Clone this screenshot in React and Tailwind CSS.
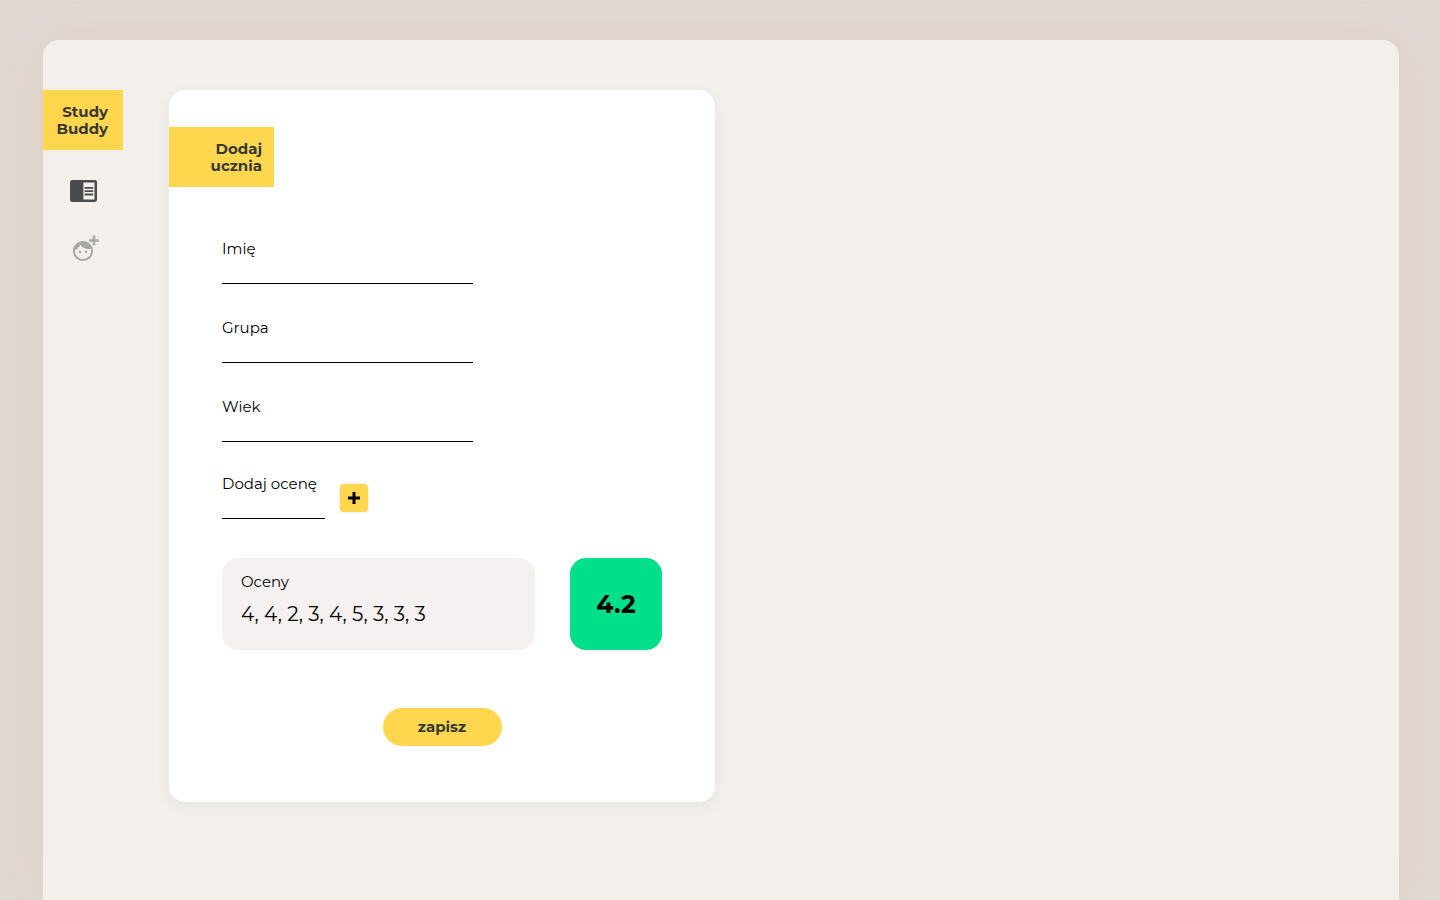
function ReaderIcon() {
  return (
    <svg viewBox="0 0 27 22" className="h-[22px] w-[27px]" fill="currentColor" aria-hidden="true">
      <path
        fillRule="evenodd"
        d="M2.2 0h22.6Q27 0 27 2.2v17.6q0 2.2-2.2 2.2H2.2Q0 22 0 19.8V2.2Q0 0 2.2 0zM13.4 2.6v16.9h11.1V2.6z"
      />
      <path d="M14.6 7h8.6v1.8h-8.6zM14.6 10.2h8.6V12h-8.6zM14.6 13.6h8.6v1.8h-8.6z" />
    </svg>
  );
}

function AddStudentIcon() {
  return (
    <svg viewBox="0 0 30 28" className="h-7 w-[30px]" fill="currentColor" aria-hidden="true">
      <g transform="translate(0 4)">
        <path d="M9 11.75c-.69 0-1.25.56-1.25 1.25s.56 1.25 1.25 1.25 1.25-.56 1.25-1.25-.56-1.25-1.25-1.25zm6 0c-.69 0-1.25.56-1.25 1.25s.56 1.25 1.25 1.25 1.25-.56 1.25-1.25-.56-1.25-1.25-1.25zM12 2C6.48 2 2 6.48 2 12s4.48 10 10 10 10-4.48 10-10S17.52 2 12 2zm0 18c-4.41 0-8-3.59-8-8 0-.29.02-.58.05-.86 2.36-1.05 4.23-2.98 5.21-5.37C11.07 8.33 14.05 10 17.42 10c.78 0 1.53-.09 2.25-.26.21.71.33 1.47.33 2.26 0 4.41-3.59 8-8 8z" />
      </g>
      <path d="M21.7 0.5h2.6v3.7h3.7v2.6h-3.7v3.4h-2.6V6.8h-3.7V4.2h3.7z" />
    </svg>
  );
}

function Field({ id, label, width }) {
  return (
    <div className={`flex flex-col ${width}`}>
      <label htmlFor={id} className="whitespace-nowrap leading-[22px]">
        {label}
      </label>
      <input id={id} type="text" className="h-6 w-full border-b border-black bg-transparent outline-none" />
    </div>
  );
}

export default function App() {
  return (
    <div className="flex min-h-screen bg-[#e0d8d3] pl-[43px] pr-[41px] pt-10 font-[Montserrat,'Noto_Sans',sans-serif] text-[15px] text-black">
      <div className="flex flex-1 items-start gap-[46px] rounded-t-2xl bg-[#f3f0eb] pt-[50px] shadow-[0_0_40px_#e0cfc2]">
        <aside className="w-20 shrink-0">
          <h1 className="flex h-[60px] flex-col justify-center bg-[#ffd74f] pr-[15px] text-right leading-[17px] font-bold text-[#383838]">
            <span>Study</span>
            <span>Buddy</span>
          </h1>
          <nav className="flex flex-col items-start gap-[33px] pt-[30px] pl-[27px]">
            <a href="#students" aria-label="Uczniowie" className="text-[#4b4b4b]">
              <ReaderIcon />
            </a>
            <a href="#add" aria-label="Dodaj ucznia" className="pl-px text-[#a9a8a6]">
              <AddStudentIcon />
            </a>
          </nav>
        </aside>

        <main className="mb-24 w-full max-w-[546px] rounded-2xl bg-white pt-[37px] pb-14 shadow-[0_4px_16px_rgba(60,90,70,0.07)]">
          <h2 className="flex h-[60px] w-[105px] flex-col justify-center bg-[#ffd74f] pr-3 text-right leading-[17px] font-bold text-[#383838]">
            <span>Dodaj</span>
            <span>ucznia</span>
          </h2>
          <form className="flex flex-col px-[53px] pt-[51px]" onSubmit={(e) => e.preventDefault()}>
            <div className="flex flex-col gap-[33px]">
              <Field id="name" label="Imię" width="w-[251px]" />
              <Field id="group" label="Grupa" width="w-[251px]" />
              <Field id="age" label="Wiek" width="w-[251px]" />
            </div>
            <div className="flex items-center gap-[15px] pt-[31px]">
              <Field id="grade" label="Dodaj ocenę" width="w-[103px]" />
              <button
                type="button"
                aria-label="Dodaj ocenę do listy"
                className="mt-1 flex size-7 items-center justify-center rounded bg-[#ffd74f] shadow-[0_0_3px_rgba(0,0,0,0.12)]"
              >
                <svg viewBox="0 0 12 12" className="size-3" aria-hidden="true">
                  <path d="M4.5 0h3v4.5H12v3H7.5V12h-3V7.5H0v-3h4.5z" />
                </svg>
              </button>
            </div>
            <div className="flex justify-between gap-[35px] pt-[39px]">
              <section className="flex h-[92px] flex-1 flex-col rounded-2xl bg-[#f5f1f0] px-[19px] pt-[14px]">
                <h3 className="leading-5">Oceny</h3>
                <p className="pt-2 text-xl">4, 4, 2, 3, 4, 5, 3, 3, 3</p>
              </section>
              <output className="flex size-[92px] items-center justify-center rounded-2xl bg-[#00e08a] text-[25px] leading-8 font-bold">
                4.2
              </output>
            </div>
            <button
              type="submit"
              className="mt-[58px] h-[38px] w-[119px] self-center rounded-full bg-[#ffd74f] font-bold text-[#383838]"
            >
              zapisz
            </button>
          </form>
        </main>
      </div>
    </div>
  );
}
